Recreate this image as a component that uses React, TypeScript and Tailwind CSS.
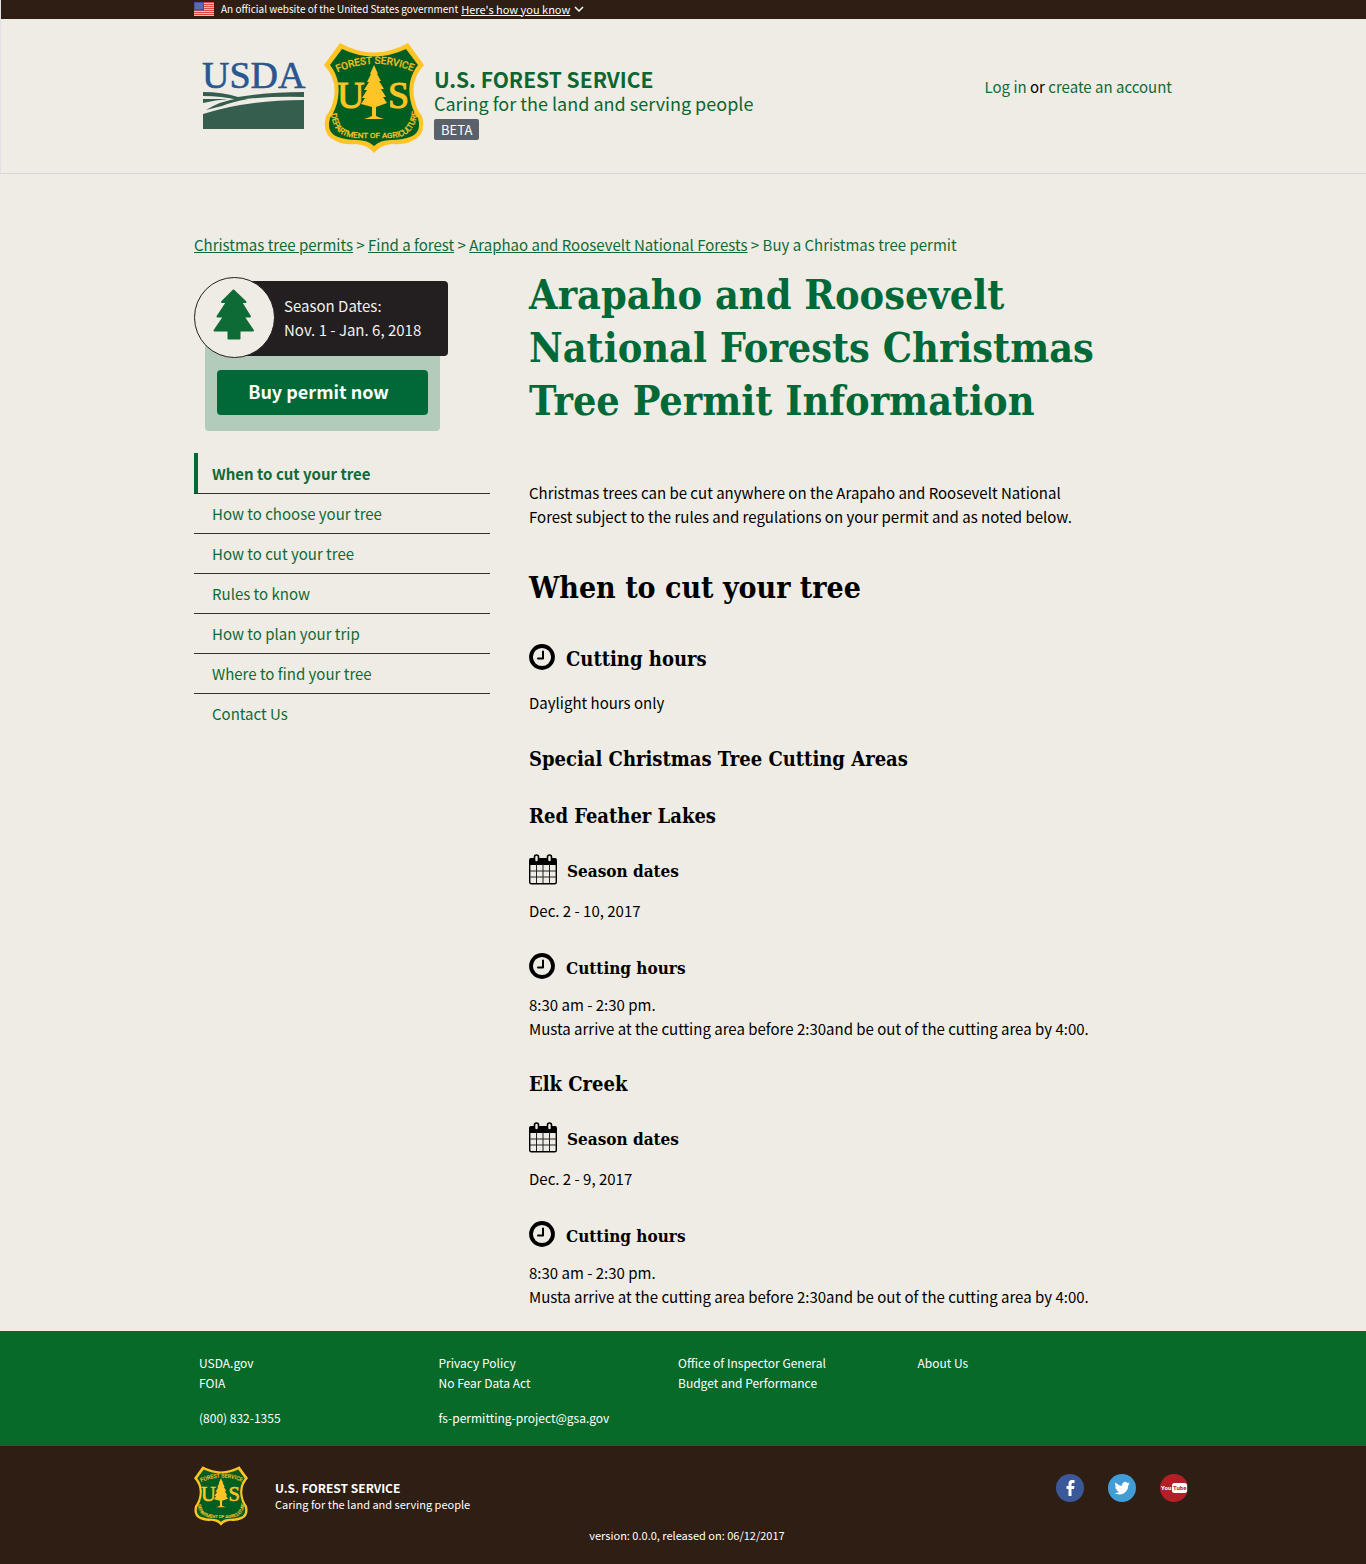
import React from "react";

const sans = "font-['Noto_Sans_CJK_SC','Noto_Sans',sans-serif]";
const serif = "font-['DejaVu_Serif_Condensed','DejaVu_Serif',serif]";

function Shield({ id, className }: { id: string; className: string }) {
  return (
    <svg viewBox="0 0 100 110" className={className} role="img" aria-label="U.S. Forest Service">
      <path
        d="M16 0 Q50 19 84 0 L100 22 Q87 36 90 54 Q92 66 98 73 Q103 92 88 98 Q80 102 68 101 Q56 102 50 110 Q44 102 32 101 Q20 102 12 98 Q-3 92 2 73 Q8 66 10 54 Q13 36 0 22 Z"
        fill="#ffc425"
      />
      <path
        d="M18 6 Q50 21 82 6 L94 22 Q83 36 86 55 Q88 67 94 75 Q98 90 86 94 Q78 97 67 97 Q56 97 50 103 Q44 97 33 97 Q22 97 14 94 Q2 90 6 75 Q12 67 14 55 Q17 36 6 22 Z"
        fill="#005f20"
      />
      <path id={`${id}-top`} d="M12 30 Q50 12 90 29" fill="none" />
      <path id={`${id}-bottom`} d="M7 68 Q8 95 34 95 H66 Q92 95 94 66" fill="none" />
      <g fill="#ffc425" stroke="#ffc425" strokeWidth="0.3" className="font-['Roboto',sans-serif]">
        <text fontSize="10">
          <textPath href={`#${id}-top`} startOffset="50%" textAnchor="middle">FOREST SERVICE</textPath>
        </text>
        <text fontSize="8">
          <textPath href={`#${id}-bottom`} startOffset="50%" textAnchor="middle">DEPARTMENT OF AGRICULTURE</textPath>
        </text>
      </g>
      <g fill="#ffc425" stroke="#ffc425" strokeWidth="1" className="font-['Liberation_Serif',serif]" fontSize="38">
        <text x="13" y="65">U</text>
        <text x="64" y="65">S</text>
      </g>
      <path
        d="M50 22 L54 31 L53 31 L57 38 L55 38 L60 46 L57 46 L62 54 L59 54 L63 60 L52 64 L52 73 Q56 75 60 76 L40 76 Q44 75 48 73 L48 64 L37 61 L41 55 L38 55 L43 47 L40 47 L45 39 L43 39 L47 31 L46 31 Z"
        fill="#ffc425"
      />
    </svg>
  );
}

function UsdaLogo() {
  return (
    <svg viewBox="0 0 104 74" className="w-[104px] h-[74px]" role="img" aria-label="USDA">
      <text x="0" y="33" fontSize="38" fill="#2a5790" stroke="#2a5790" strokeWidth="0.6" className="font-['Liberation_Serif',serif]">USDA</text>
      <path d="M1 37 Q20 37 36 42 Q66 37 102 37 V42 Q66 41 36 45 Q20 41 1 41 Z" fill="#355e4e" />
      <path d="M1 44 H26 Q14 45 1 48 Z" fill="#355e4e" />
      <path d="M4 55 Q18 46 38 43 L46 44 Q30 47 20 51 Z" fill="#355e4e" />
      <path d="M1 59 Q44 45 102 45 V74 H1 Z" fill="#355e4e" />
    </svg>
  );
}

function Flag() {
  return (
    <svg viewBox="0 0 20 14" className="w-5 h-3.5" aria-hidden="true">
      <rect width="20" height="14" fill="#f3d9d5" />
      {[0, 2, 4, 6, 8, 10, 12].map((y) => (
        <rect key={y} y={y} width="20" height="1.2" fill="#dd4b40" />
      ))}
      <rect width="10" height="8.5" fill="#3f51a8" />
      {[1.5, 3.5, 5.5].map((y) =>
        [1.5, 3.5, 5.5, 7.5].map((x) => <rect key={`${x}-${y}`} x={x} y={y} width="1" height="1" fill="#a9b4e0" />)
      )}
    </svg>
  );
}

function TreeIcon() {
  return (
    <svg viewBox="0 0 42 51" className="w-[42px] h-[51px]" aria-hidden="true">
      <path
        d="M20.500 1.500 L32.500 13 H28 L37 27.500 H30.500 L40 41.500 H26.500 V49.500 H15.500 V41.500 H1.500 L11 27.500 H4.500 L14 13 H9 Z"
        fill="#0f6b35" stroke="#0f6b35" strokeWidth="2" strokeLinejoin="round"
      />
    </svg>
  );
}

function Clock() {
  return (
    <svg viewBox="0 0 26 26" className="w-[26px] h-[26px] shrink-0" aria-hidden="true">
      <circle cx="13" cy="13" r="11" fill="none" stroke="#000" strokeWidth="3.800" />
      <path d="M14 7.500 V14.500 H9" fill="none" stroke="#000" strokeWidth="2" strokeLinecap="round" strokeLinejoin="round" />
    </svg>
  );
}

function Calendar() {
  return (
    <svg viewBox="0 0 28 31" className="w-7 h-[31px] shrink-0" aria-hidden="true">
      <rect x="0.700" y="4.700" width="26.600" height="25" rx="1.500" fill="none" stroke="#000" strokeWidth="1.400" />
      <path d="M0.500 11 V6 Q0.500 4 2.500 4 H25.500 Q27.500 4 27.500 6 V11 Z" fill="#000" />
      <path d="M7.500 10 V29 M14 10 V29 M20.500 10 V29 M1 17 H27 M1 23 H27" stroke="#222" strokeWidth="1" />
      <rect x="5.500" y="1" width="4" height="7" rx="2" fill="#efece5" stroke="#000" strokeWidth="1.600" />
      <rect x="18.500" y="1" width="4" height="7" rx="2" fill="#efece5" stroke="#000" strokeWidth="1.600" />
    </svg>
  );
}

function Area({ name, dates }: { name: string; dates: string }) {
  return (
    <section className="pt-[25px] pb-0.5">
      <h3 className={`${serif} text-[20px] leading-8 font-bold`}>{name}</h3>
      <div className="mt-[21px] flex items-center gap-[10px]">
        <Calendar />
        <h4 className={`${serif} pt-1 text-[17px] leading-7 font-bold`}>Season dates</h4>
      </div>
      <p className="mt-[14px] text-[15px] leading-6">{dates}</p>
      <div className="mt-[27px] flex items-center gap-[11px]">
        <Clock />
        <h4 className={`${serif} pt-1 text-[17px] leading-7 font-bold`}>Cutting hours</h4>
      </div>
      <p className="mt-[11px] text-[15px] leading-6">
        8:30 am - 2:30 pm.
        <br />
        Musta arrive at the cutting area before 2:30and be out of the cutting area by 4:00.
      </p>
    </section>
  );
}

const sections = [
  "When to cut your tree",
  "How to choose your tree",
  "How to cut your tree",
  "Rules to know",
  "How to plan your trip",
  "Where to find your tree",
  "Contact Us",
];

const footerColumns = [
  { links: ["USDA.gov", "FOIA"], contact: "(800) 832-1355" },
  { links: ["Privacy Policy", "No Fear Data Act"], contact: "fs-permitting-project@gsa.gov" },
  { links: ["Office of Inspector General", "Budget and Performance"] },
  { links: ["About Us"] },
];

const wrap = "mx-auto w-full max-w-[978px]";

export default function App() {
  return (
    <div className={`${sans} min-h-screen bg-[#efece5] text-black`}>
      <header className="border-b border-b-[#d6d7d9]">
        <div className="bg-[#2e1e13] text-white shadow-[inset_1px_0_0_#e1e2e6]">
          <div className={`${wrap} flex h-[19px] items-center pb-0.5`}>
            <Flag />
            <span className="ml-[7px] text-[10px] leading-4">An official website of the United States government</span>
            <button className="ml-[3px] flex items-center gap-1 text-[11px] leading-4">
              <span className="underline">Here's how you know</span>
              <svg viewBox="0 0 10 6" className="w-2.5 h-1.5" aria-hidden="true">
                <path d="M1 1 L5 5 L9 1" fill="none" stroke="#fff" strokeWidth="1.500" />
              </svg>
            </button>
          </div>
        </div>
        <div className="shadow-[inset_1px_0_0_#e1e2e6]">
          <div className={`${wrap} flex items-start pt-6 pb-5`}>
            <div className="ml-2 mt-3"><UsdaLogo /></div>
            <Shield id="header" className="ml-[18px] w-[100px] h-[110px]" />
            <div className="ml-[10px] mt-6">
              <p className="text-[21px] leading-6 font-bold text-[#0b6630]">U.S. FOREST SERVICE</p>
              <p className="text-[18px] leading-6 text-[#0b6630]">Caring for the land and serving people</p>
              <span className="mt-1 inline-block rounded-xs bg-[#5b616b] px-[7px] text-[13px] leading-[21px] text-white">BETA</span>
            </div>
            <p className="ml-auto mt-8 text-[15px] leading-6">
              <a href="#login" className="text-[#0f6b35]">Log in</a> or <a href="#create" className="text-[#0f6b35]">create an account</a>
            </p>
          </div>
        </div>
      </header>

      <div className={`${wrap} pt-[59px]`}>
        <nav aria-label="Breadcrumb" className="text-[15px] leading-6 text-[#0f6b35]">
          <a href="#permits" className="underline">Christmas tree permits</a> &gt;{" "}
          <a href="#find" className="underline">Find a forest</a> &gt;{" "}
          <a href="#forest" className="underline">Araphao and Roosevelt National Forests</a> &gt;{" "}
          <span>Buy a Christmas tree permit</span>
        </nav>

        <div className="flex gap-[39px] pt-3 pb-5">
          <aside className="w-[296px] shrink-0 pt-2">
            <div className="w-[254px]">
              <div className="relative z-10 flex h-20 items-start pt-1">
                <div className="ml-10 flex h-[75px] flex-1 items-center rounded bg-[#231f20] pb-0.5 pl-[50px] text-[15px] leading-6 text-[#f3f1ec]">
                  <p>
                    Season Dates:
                    <br />
                    Nov. 1 - Jan. 6, 2018
                  </p>
                </div>
                <div className="absolute left-0 top-0 flex h-[81px] w-[81px] items-center justify-center rounded-full border border-[#231f20] bg-[#efece5] pr-0.5 pb-1.5">
                  <TreeIcon />
                </div>
              </div>
              <div className="-mt-6 ml-[11px] mr-2 rounded-b bg-[#b3cbba] px-3 pt-[37px] pb-4">
                <button className="h-[45px] w-full rounded bg-[#006937] pr-2 pb-1 text-[18px] leading-6 font-bold text-white">Buy permit now</button>
              </div>
            </div>
            <nav aria-label="Page sections" className="mt-[22px]">
              <ul>
                {sections.map((label, i) => (
                  <li key={label} className={i < sections.length - 1 ? "border-b border-[#333]" : ""}>
                    <a
                      href={`#section-${i}`}
                      className={
                        i === 0
                          ? "block border-l-4 border-[#006937] pt-[9px] pb-2 pl-[14px] text-[15px] leading-[23px] font-bold text-[#0f6b35]"
                          : "block py-2 pl-[18px] text-[15px] leading-[23px] text-[#0f6b35]"
                      }
                    >
                      {label}
                    </a>
                  </li>
                ))}
              </ul>
            </nav>
          </aside>

          <main className="min-w-0 flex-1">
            <h1 className={`${serif} max-w-[600px] text-[41px] leading-[53px] font-bold text-[#006937]`}>
              Arapaho and Roosevelt National Forests Christmas Tree Permit Information
            </h1>
            <p className="mt-[53px] max-w-[570px] text-[15px] leading-6">
              Christmas trees can be cut anywhere on the Arapaho and Roosevelt National Forest subject to the rules and regulations on your permit and as noted below.
            </p>
            <h2 className={`${serif} mt-[39px] text-[30px] leading-10 font-bold`}>When to cut your tree</h2>
            <div className="mt-[33px] flex items-center gap-[11px]">
              <Clock />
              <h3 className={`${serif} pt-1 text-[20px] leading-7 font-bold`}>Cutting hours</h3>
            </div>
            <p className="mt-[18px] text-[15px] leading-6">Daylight hours only</p>
            <h3 className={`${serif} mt-7 text-[20px] leading-8 font-bold`}>Special Christmas Tree Cutting Areas</h3>
            <Area name="Red Feather Lakes" dates="Dec. 2 - 10, 2017" />
            <Area name="Elk Creek" dates="Dec. 2 - 9, 2017" />
          </main>
        </div>
      </div>

      <footer className="text-white">
        <div className="bg-[#076a28]">
          <div className={`${wrap} grid grid-cols-4 pt-[22px] pr-[15px] pb-[18px] pl-[5px] text-[12px] leading-5`}>
            {footerColumns.map((col) => (
              <div key={col.links[0]}>
                {col.links.map((l) => (
                  <a key={l} href="#footer" className="block">{l}</a>
                ))}
                {col.contact && <a href="#contact" className="mt-[15px] block">{col.contact}</a>}
              </div>
            ))}
          </div>
        </div>
        <div className="bg-[#2e1e13] pt-5 pb-4">
          <div className={`${wrap} flex items-start`}>
            <Shield id="footer" className="w-[54px] h-[60px]" />
            <div className="ml-[27px] mt-[14px]">
              <p className="text-[12px] leading-4 font-bold">U.S. FOREST SERVICE</p>
              <p className="text-[11px] leading-4">Caring for the land and serving people</p>
            </div>
            <div className="ml-auto -mr-4 mt-2 flex gap-6">
              <a href="#facebook" aria-label="Facebook">
                <svg viewBox="0 0 28 28" className="h-7 w-7">
                  <circle cx="14" cy="14" r="14" fill="#3b5998" />
                  <path d="M12.500 22 V15 H10.500 V12 H12.500 V10 Q12.500 6 16 6 H18.500 V9 H17 Q15.500 9 15.500 10.300 V12 H18.500 L18 15 H15.500 V22 Z" fill="#fff" />
                </svg>
              </a>
              <a href="#twitter" aria-label="Twitter">
                <svg viewBox="0 0 28 28" className="h-7 w-7">
                  <circle cx="14" cy="14" r="14" fill="#429cd6" />
                  <g transform="translate(6.500 6.500) scale(0.640)">
                    <path d="M23.950 4.570a10 10 0 0 1-2.820.770 4.960 4.960 0 0 0 2.160-2.720c-.950.550-2 .960-3.130 1.180a4.920 4.920 0 0 0-8.380 4.480C7.690 8.100 4.070 6.130 1.640 3.160a4.820 4.820 0 0 0-.670 2.480c0 1.710.870 3.210 2.190 4.100a4.900 4.900 0 0 1-2.230-.620v.060a4.920 4.920 0 0 0 3.950 4.830 5 5 0 0 1-2.210.080 4.940 4.940 0 0 0 4.600 3.420A9.870 9.870 0 0 1 0 19.540a14 14 0 0 0 7.550 2.210c9.050 0 14-7.500 14-13.980 0-.210 0-.420-.020-.630a9.940 9.940 0 0 0 2.460-2.550z" fill="#fff" />
                  </g>
                </svg>
              </a>
              <a href="#youtube" aria-label="YouTube">
                <svg viewBox="0 0 28 28" className="h-7 w-7">
                  <circle cx="14" cy="14" r="14" fill="#b31f27" />
                  <rect x="12" y="9" width="15" height="10" rx="2.500" fill="#fff" />
                  <g className="font-['Roboto',sans-serif]" fontSize="6" fontWeight="bold">
                    <text x="1" y="16" fill="#fff">You</text>
                    <text x="13" y="16" fill="#b31f27">Tube</text>
                  </g>
                </svg>
              </a>
            </div>
          </div>
          <p className="-mt-1 pl-2 text-center text-[11px] leading-[26px]">version: 0.0.0, released on: 06/12/2017</p>
        </div>
      </footer>
    </div>
  );
}
